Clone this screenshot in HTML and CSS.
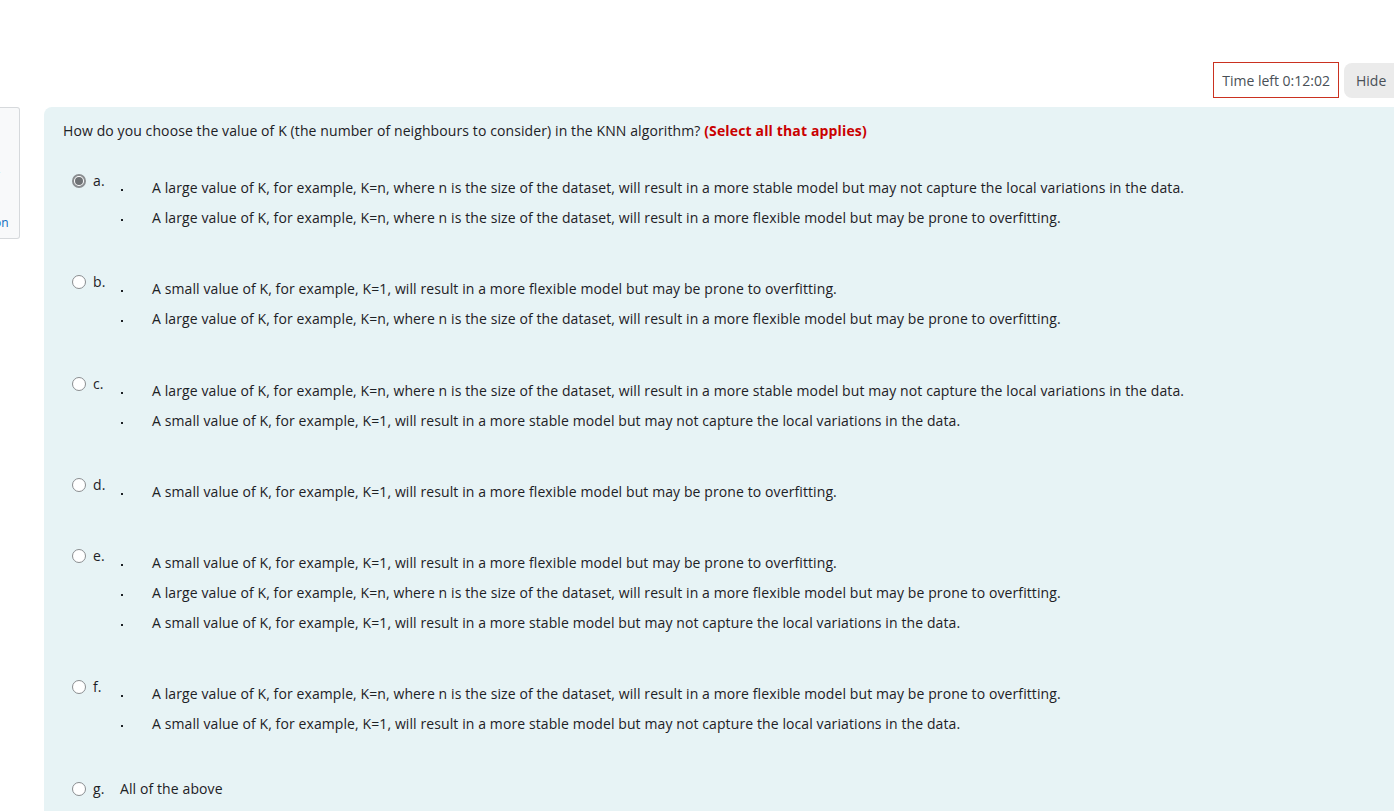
FILE: index.html
```html
<!DOCTYPE html>
<html>
<head>
<meta charset="utf-8">
<link rel="stylesheet" href="styles.css">
</head>
<body>
<div class="topbar">
  <div class="timer">Time left 0:12:02</div>
  <button class="hide">Hide</button>
</div>
<div class="main">
  <aside class="side">
    <span class="side-mark">-</span>
    <span class="side-link">on</span>
  </aside>
  <section class="question">
    <div class="qtext">How do you choose the value of K (the number of neighbours to consider) in the KNN algorithm? <strong class="req">(Select all that applies)</strong></div>
    <div class="answers">
      <div class="opt">
        <span class="radio checked"></span><span class="letter">a.</span>
        <ul class="items">
          <li>A large value of K, for example, K=n, where n is the size of the dataset, will result in a more stable model but may not capture the local variations in the data.</li>
          <li>A large value of K, for example, K=n, where n is the size of the dataset, will result in a more flexible model but may be prone to overfitting.</li>
        </ul>
      </div>
      <div class="opt">
        <span class="radio"></span><span class="letter">b.</span>
        <ul class="items">
          <li>A small value of K, for example, K=1, will result in a more flexible model but may be prone to overfitting.</li>
          <li>A large value of K, for example, K=n, where n is the size of the dataset, will result in a more flexible model but may be prone to overfitting.</li>
        </ul>
      </div>
      <div class="opt">
        <span class="radio"></span><span class="letter">c.</span>
        <ul class="items">
          <li>A large value of K, for example, K=n, where n is the size of the dataset, will result in a more stable model but may not capture the local variations in the data.</li>
          <li>A small value of K, for example, K=1, will result in a more stable model but may not capture the local variations in the data.</li>
        </ul>
      </div>
      <div class="opt">
        <span class="radio"></span><span class="letter">d.</span>
        <ul class="items">
          <li>A small value of K, for example, K=1, will result in a more flexible model but may be prone to overfitting.</li>
        </ul>
      </div>
      <div class="opt">
        <span class="radio"></span><span class="letter">e.</span>
        <ul class="items">
          <li>A small value of K, for example, K=1, will result in a more flexible model but may be prone to overfitting.</li>
          <li>A large value of K, for example, K=n, where n is the size of the dataset, will result in a more flexible model but may be prone to overfitting.</li>
          <li>A small value of K, for example, K=1, will result in a more stable model but may not capture the local variations in the data.</li>
        </ul>
      </div>
      <div class="opt">
        <span class="radio"></span><span class="letter">f.</span>
        <ul class="items">
          <li>A large value of K, for example, K=n, where n is the size of the dataset, will result in a more flexible model but may be prone to overfitting.</li>
          <li>A small value of K, for example, K=1, will result in a more stable model but may not capture the local variations in the data.</li>
        </ul>
      </div>
      <div class="opt">
        <span class="radio"></span><span class="letter">g.</span>
        <span class="plain">All of the above</span>
      </div>
    </div>
  </section>
</div>
</body>
</html>
```

FILE: styles.css
```css
html, body {
  margin: 0;
  padding: 0;
  background: #ffffff;
  overflow: hidden;
}
body {
  font-family: "Open Sans", "Noto Sans", sans-serif;
  font-size: 14px;
  color: #1d2125;
  height: 811px;
}
.topbar {
  height: 107px;
  display: flex;
  justify-content: flex-end;
  align-items: flex-start;
  gap: 5px;
  padding-top: 62px;
  box-sizing: border-box;
  margin-right: -30px;
}
.timer {
  border: 1px solid #ca3120;
  height: 36px;
  box-sizing: border-box;
  padding: 0 8px;
  display: flex;
  align-items: center;
  color: #495057;
  font-size: 14px;
}
.hide {
  margin-top: 1px;
  height: 35px;
  width: 80px;
  border: none;
  border-radius: 8px;
  background: #ebebeb;
  color: #495057;
  font-family: inherit;
  font-size: 14px;
  padding: 0 0 0 12px;
  text-align: left;
}
.main {
  display: flex;
  gap: 24px;
  align-items: flex-start;
}
.side {
  width: 20px;
  height: 132px;
  box-sizing: border-box;
  border: 1px solid #d6d9dc;
  border-left: none;
  border-radius: 0 3px 3px 0;
  background: #f8f9fa;
  position: relative;
  overflow: hidden;
}
.side-mark {
  position: absolute;
  left: -3px;
  top: 56px;
  color: #6fb6e6;
  font-size: 10px;
}
.side-link {
  position: absolute;
  left: -6px;
  top: 106px;
  color: #0f6cbf;
  font-size: 12px;
}
.question {
  flex: 1;
  background: #e7f3f5;
  border-radius: 8px 0 0 0;
  height: 710px;
  margin-right: -20px;
  padding: 13px 0 0 19px;
  box-sizing: border-box;
}
.qtext {
  line-height: 21px;
  letter-spacing: 0.1px;
}
.req {
  color: #ca0000;
  font-weight: 700;
  letter-spacing: 0.15px;
}
.answers {
  margin-top: 29px;
  display: flex;
  flex-direction: column;
  gap: 38.3px;
  padding-left: 9px;
}
.opt {
  display: flex;
  align-items: flex-start;
  line-height: 21px;
  letter-spacing: 0.1px;
}
.radio {
  width: 14px;
  height: 14px;
  border: 1px solid #8a8d90;
  border-radius: 50%;
  background: #fff;
  box-sizing: border-box;
  margin-top: 4px;
  flex: none;
  position: relative;
}
.radio.checked {
  border-color: #8a8d90;
  border-width: 2px;
  background: #fff;
}
.radio.checked::after {
  content: "";
  position: absolute;
  left: 1px;
  top: 1px;
  width: 8px;
  height: 8px;
  border-radius: 50%;
  background: #6f7275;
}
.letter {
  margin-left: 7px;
  width: 27px;
  flex: none;
}
.items {
  list-style: none;
  margin: 3px 0 0 0;
  padding: 0;
}
.items li {
  line-height: 30px;
  position: relative;
  padding-left: 32px;
}
.items li::before {
  content: "";
  position: absolute;
  left: 1px;
  top: 16px;
  width: 2px;
  height: 2px;
  background: #1d2125;
}
```
